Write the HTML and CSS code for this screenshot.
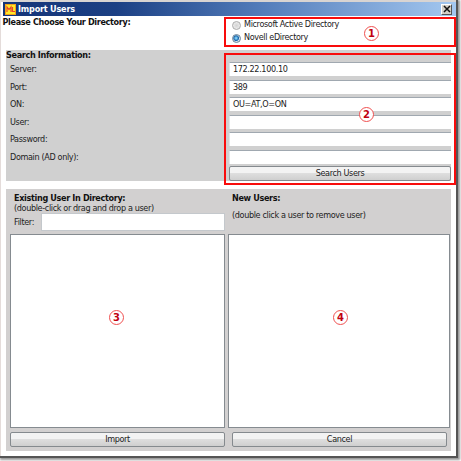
FILE: index.html
```
<!DOCTYPE html>
<html lang="en">
<head>
<meta charset="utf-8">
<title>Import Users</title>
<link rel="stylesheet" href="styles.css">
</head>
<body>
<div class="window">
  <header class="titlebar">
    <svg class="logo" width="11" height="11" viewBox="0 0 11 11"><rect width="11" height="11" fill="#f0a01c"/><rect x="1" y="1" width="9" height="9" fill="#ffe928"/><path d="M2 8V3l2 2.5L6 3v5M7.5 3v4.5H10" fill="none" stroke="#e8452c" stroke-width="1.2"/></svg>
    <h1 class="title">Import Users</h1>
    <button class="close" aria-label="Close"><svg width="8" height="8" viewBox="0 0 8 8"><path d="M1 1l6 6M7 1L1 7" stroke="#111" stroke-width="1.5"/></svg></button>
  </header>
  <section class="choose">
    <h2 class="bold choose-title">Please Choose Your Directory:</h2>
    <div class="radios">
      <label class="option"><i class="radio"></i><span>Microsoft Active Directory</span></label>
      <label class="option"><i class="radio on"></i><span>Novell eDirectory</span></label>
      <b class="mark m1">1</b>
    </div>
  </section>
  <section class="search">
    <h2 class="bold search-title">Search Information:</h2>
    <div class="form">
      <span>Server:</span><div class="field">172.22.100.10</div>
      <span>Port:</span><div class="field">389</div>
      <span>ON:</span><div class="field">OU=AT,O=ON</div>
      <span>User:</span><div class="field"></div>
      <span>Password:</span><div class="field"></div>
      <span>Domain (AD only):</span><div class="field"></div>
    </div>
    <button class="btn search-btn">Search Users</button>
    <div class="frame"><b class="mark m2">2</b></div>
  </section>
  <section class="users">
    <div class="col left">
      <div class="head">
        <h2 class="bold">Existing User In Directory:</h2>
        <p class="hint">(double-click or drag and drop a user)</p>
        <div class="filter"><span>Filter:</span><div class="filter-input"></div></div>
      </div>
      <div class="list"><b class="mark m3">3</b></div>
      <button class="btn">Import</button>
    </div>
    <div class="col right">
      <div class="head">
        <h2 class="bold">New Users:</h2>
        <p class="hint remove">(double click a user to remove user)</p>
      </div>
      <div class="list"><b class="mark m4">4</b></div>
      <button class="btn cancel">Cancel</button>
    </div>
  </section>
</div>
</body>
</html>
```
FILE: styles.css
```
* { box-sizing: border-box; }
body {
  margin: 0;
  width: 461px;
  height: 461px;
  overflow: hidden;
  background: #fff;
  font: 9px/11px "DejaVu Sans Condensed", "DejaVu Sans", sans-serif;
  font-stretch: condensed;
  letter-spacing: -0.36px;
  color: #222;
}
h1, h2, p { margin: 0; font-size: inherit; }
.window {
  width: 456px;
  height: 456px;
  padding-left: 2px;
  border-top: 2px solid #d8d4d2;
  border-left: 1px solid #e4dcda;
  background: #fff;
  box-shadow: 1px 1px 0 1px #555, 2px 2px 2px 2px #999;
}
.titlebar {
  display: flex;
  align-items: center;
  height: 14px;
  padding: 0 4px 0 2px;
  background: linear-gradient(90deg, #143478, #1c4084 25%, #527cba 57%, #a4c8f0);
}
.logo { display: block; }
.title {
  flex: 1;
  margin-left: 2px;
  color: #fff;
  font-weight: bold;
  letter-spacing: -0.2px;
}
.close {
  display: grid;
  place-items: center;
  width: 11px;
  height: 11px;
  padding: 0;
  border: 1px solid;
  border-color: #fff #555 #555 #fff;
  background: #d4d0c8;
}
.bold { font-weight: bold; color: #111; letter-spacing: -0.34px; }
.choose {
  display: flex;
  justify-content: space-between;
  height: 34px;
}
.choose-title { padding-top: 1px; margin-left: -0.5px; }
.radios {
  position: relative;
  width: 232px;
  height: 30px;
  margin-top: 1px;
  padding: 0 6px;
  border: 2px solid #f80c0c;
}
.option { display: flex; align-items: center; gap: 3px; height: 14px; }
.option:first-child { height: 12px; }
.option span { margin-top: -1px; }
.radio {
  width: 9px;
  height: 9px;
  border: 1px solid #aaa;
  border-radius: 50%;
  background: radial-gradient(#d4d4d4, #f4f4f4);
}
.radio.on {
  border-color: #6c8498;
  background: radial-gradient(circle at 45% 45%, #80d0f8 10%, #1c68ac 45%, #d4e4f0 60%);
}
.search {
  position: relative;
  width: 445px;
  height: 131px;
  margin-left: 3px;
  background: #d0d0d0;
}
.search-title { height: 12px; }
.form {
  display: grid;
  grid-template-columns: 219px 222px;
  grid-auto-rows: 17.6px;
  padding-left: 4px;
}
.form > span { padding-top: 2px; }
.field {
  height: 14px;
  padding: 1px 3px;
  border-top: 1px solid #a0a8b0;
  border-left: 1px solid #e2e4e6;
  background: #fff;
}
.btn {
  display: grid;
  place-items: center;
  width: 100%;
  height: 15px;
  padding: 0;
  border: 1px solid #858a8e;
  border-radius: 2px;
  background: linear-gradient(#f3f3f3 0 45%, #dedede 50%, #cfcfcf);
  font: inherit;
  letter-spacing: inherit;
  color: #222;
}
.search-btn { width: 222px; margin: -2px 0 0 223px; }
.frame {
  position: absolute;
  left: 218px;
  top: 3px;
  width: 232px;
  height: 132px;
  border: 2px solid #f80c0c;
}
.users {
  display: flex;
  width: 445px;
  height: 262px;
  margin: 8px 0 0 3px;
  padding: 0 0 5px 4px;
  gap: 3px;
  background: #d2d0d0;
}
.left { width: 215px; }
.right { width: 222px; }
.head { height: 45px; padding: 4px 0 0 4px; }
.hint { margin-top: -1px; }
.remove { margin-top: 6px; }
.filter { display: flex; align-items: center; justify-content: space-between; margin-top: -1px; }
.filter-input { width: 184px; height: 18px; border: 1px solid #c4c8cc; background: #fff; }
.list {
  position: relative;
  height: 194px;
  margin-bottom: 4px;
  border: 1px solid #858b90;
  background: #fff;
}
.cancel { width: 215px; margin-left: 4px; }
.mark {
  position: absolute;
  width: 15px;
  height: 15px;
  border: 1px solid #f05050;
  border-radius: 50%;
  color: #c00010;
  background: #fff;
  font: bold 10px/13px "DejaVu Sans", sans-serif;
  letter-spacing: 0;
  text-align: center;
}
.m1 { left: 138px; top: 7px; }
.m2 { left: 133px; top: 52px; }
.m3 { left: 98px; top: 75px; }
.m4 { left: 104px; top: 75px; }
```
